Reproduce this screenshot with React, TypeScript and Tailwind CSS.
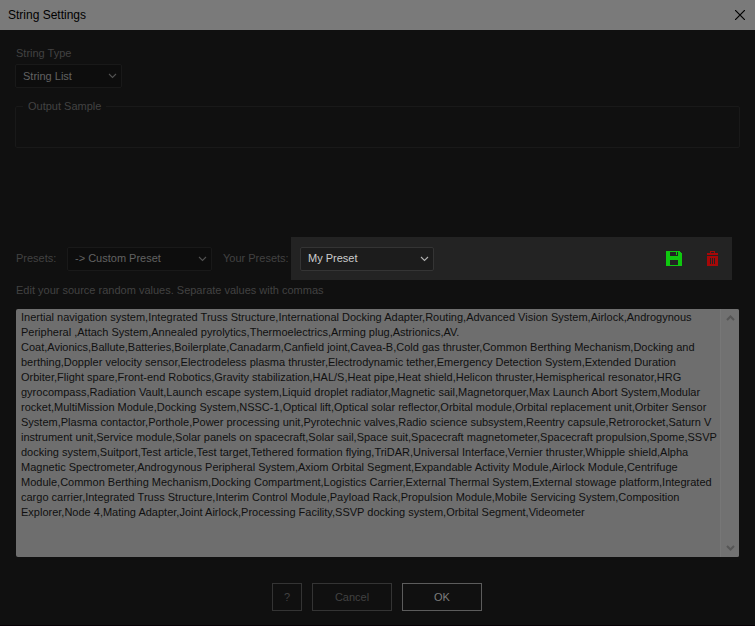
import React, { useState } from "react";
import clsx from "clsx";

const SOURCE_VALUES = [
	"Inertial navigation system,Integrated Truss Structure,International Docking Adapter,Routing,Advanced Vision System,Airlock,Androgynous",
	"Peripheral ,Attach System,Annealed pyrolytics,Thermoelectrics,Arming plug,Astrionics,AV.",
	"Coat,Avionics,Ballute,Batteries,Boilerplate,Canadarm,Canfield joint,Cavea-B,Cold gas thruster,Common Berthing Mechanism,Docking and",
	"berthing,Doppler velocity sensor,Electrodeless plasma thruster,Electrodynamic tether,Emergency Detection System,Extended Duration",
	"Orbiter,Flight spare,Front-end Robotics,Gravity stabilization,HAL/S,Heat pipe,Heat shield,Helicon thruster,Hemispherical resonator,HRG",
	"gyrocompass,Radiation Vault,Launch escape system,Liquid droplet radiator,Magnetic sail,Magnetorquer,Max Launch Abort System,Modular",
	"rocket,MultiMission Module,Docking System,NSSC-1,Optical lift,Optical solar reflector,Orbital module,Orbital replacement unit,Orbiter Sensor",
	"System,Plasma contactor,Porthole,Power processing unit,Pyrotechnic valves,Radio science subsystem,Reentry capsule,Retrorocket,Saturn V",
	"instrument unit,Service module,Solar panels on spacecraft,Solar sail,Space suit,Spacecraft magnetometer,Spacecraft propulsion,Spome,SSVP",
	"docking system,Suitport,Test article,Test target,Tethered formation flying,TriDAR,Universal Interface,Vernier thruster,Whipple shield,Alpha",
	"Magnetic Spectrometer,Androgynous Peripheral System,Axiom Orbital Segment,Expandable Activity Module,Airlock Module,Centrifuge",
	"Module,Common Berthing Mechanism,Docking Compartment,Logistics Carrier,External Thermal System,External stowage platform,Integrated",
	"cargo carrier,Integrated Truss Structure,Interim Control Module,Payload Rack,Propulsion Module,Mobile Servicing System,Composition",
	"Explorer,Node 4,Mating Adapter,Joint Airlock,Processing Facility,SSVP docking system,Orbital Segment,Videometer",
].join("\n");

type ChevronProps = { up?: boolean; className?: string; weight?: number };

const Chevron = ({ up, className, weight = 1 }: ChevronProps) => (
	<svg
		className={className}
		width="9"
		height="6"
		viewBox="0 0 9 6"
		fill="none"
		stroke="currentColor"
		strokeWidth={weight}
		aria-hidden="true"
	>
		<path d={up ? "M1 5L4.5 1.5L8 5" : "M1 1L4.5 4.5L8 1"} />
	</svg>
);

type DropdownProps = {
	id: string;
	options: string[];
	className?: string;
	active?: boolean;
};

const Dropdown = ({ id, options, className, active }: DropdownProps) => (
	<div className={clsx("relative", className)}>
		<select
			id={id}
			className={clsx(
				"block h-6 w-full appearance-none rounded-xs border pl-[7px] pr-6 focus:outline-none",
				active
					? "border-[#343434] bg-[#1c1c1c] text-[#cccccc]"
					: "border-[#191919] bg-[#0d0d0d] text-[#626262]"
			)}
		>
			{options.map((option) => (
				<option key={option}>{option}</option>
			))}
		</select>
		<Chevron
			className={clsx(
				"pointer-events-none absolute right-[5px] top-[9px]",
				active ? "text-[#b0b0b0]" : "text-[#525252]"
			)}
			weight={1.1}
		/>
	</div>
);

const App = () => {
	const [values, setValues] = useState(SOURCE_VALUES);

	return (
		<div className="min-h-screen border-b border-[#070005] bg-[#101010] font-['Liberation_Sans',Arial,sans-serif] text-[11px] leading-[15px] text-[#424242]">
			<header className="flex h-[30px] items-center justify-between bg-[#7a7a7a] pl-2 pr-[10px] text-black">
				<h1 className="text-[12px]">String Settings</h1>
				<button aria-label="Close" className="-mt-px">
					<svg width="10" height="10" viewBox="0 0 10 10" stroke="currentColor" strokeWidth="1.2">
						<path d="M0 0L10 10M10 0L0 10" />
					</svg>
				</button>
			</header>

			<main className="pl-[15px] pr-4 pt-4">
				<label htmlFor="string-type" className="block pl-px">
					String Type
				</label>
				<Dropdown
					id="string-type"
					options={["String List"]}
					className="mt-[3px] w-[107px]"
				/>

				<fieldset className="-mr-px mt-[11px] h-[49px] rounded-xs border border-[#191919] pl-[7px]">
					<legend className="px-[5px]">Output Sample</legend>
				</fieldset>

				<div className="mt-[89px] flex items-center">
					<label htmlFor="presets" className="w-[52px] pl-px">
						Presets:
					</label>
					<Dropdown
						id="presets"
						options={["-> Custom Preset"]}
						className="w-[145px]"
					/>
					<label htmlFor="your-presets" className="w-[79px] whitespace-nowrap pl-[11px]">
						Your Presets:
					</label>
					<div className="mr-[7px] flex h-[43px] flex-1 items-center bg-[#232323] pl-[9px] pr-[14px]">
						<Dropdown
							id="your-presets"
							options={["My Preset"]}
							className="w-[134px]"
							active
						/>
						<div className="ml-auto flex items-center gap-[25px]">
							<button aria-label="Save preset" className="text-[#0fc80f]">
								<svg width="16" height="15" viewBox="0 0 16 15" fill="currentColor" shapeRendering="crispEdges">
									<path
										fillRule="evenodd"
										d="M0 0H13L16 3V15H0ZM4 1V5H12V1ZM4 9V14H12V9Z"
									/>
									<path d="M10 1H11V4H10Z" />
								</svg>
							</button>
							<button aria-label="Delete preset" className="text-[#a60808]">
								<svg width="11" height="15" viewBox="0 0 11 15" fill="currentColor" shapeRendering="crispEdges">
									<path d="M3 0H8V2H11V4H0V2H3ZM4 1V2H7V1Z" fillRule="evenodd" />
									<path
										fillRule="evenodd"
										d="M0 5H11V15H0ZM3 7V13H4V7ZM5 7V13H6V7ZM7 7V13H8V7Z"
									/>
								</svg>
							</button>
						</div>
					</div>
				</div>

				<label htmlFor="values" className="mt-[3px] block pl-px">
					Edit your source random values. Separate values with commas
				</label>
				<div className="ml-px mt-[11px] flex h-[248px] overflow-hidden rounded-xs bg-[#6e6e6e]">
					<textarea
						id="values"
						wrap="off"
						spellCheck={false}
						value={values}
						onChange={(e) => setValues(e.target.value)}
						className="min-w-0 flex-1 resize-none overflow-hidden whitespace-pre pl-[5px] pt-px text-[#101010] focus:outline-none"
					/>
					<div className="flex w-[19px] flex-col items-center justify-between border-l border-[#777777] bg-[#717171] py-[6px] text-[#565656]">
						<button aria-label="Scroll up">
							<Chevron up weight={2} />
						</button>
						<button aria-label="Scroll down">
							<Chevron weight={2} />
						</button>
					</div>
				</div>

				<div className="mt-[26px] flex justify-center gap-[10px]">
					<button className="h-7 w-[30px] border border-[#343434]">?</button>
					<button className="h-7 w-20 border border-[#343434]">Cancel</button>
					<button className="h-7 w-20 border border-[#5c5c5c] text-[#7c7c7c]">OK</button>
				</div>
			</main>
		</div>
	);
};

export default App;
